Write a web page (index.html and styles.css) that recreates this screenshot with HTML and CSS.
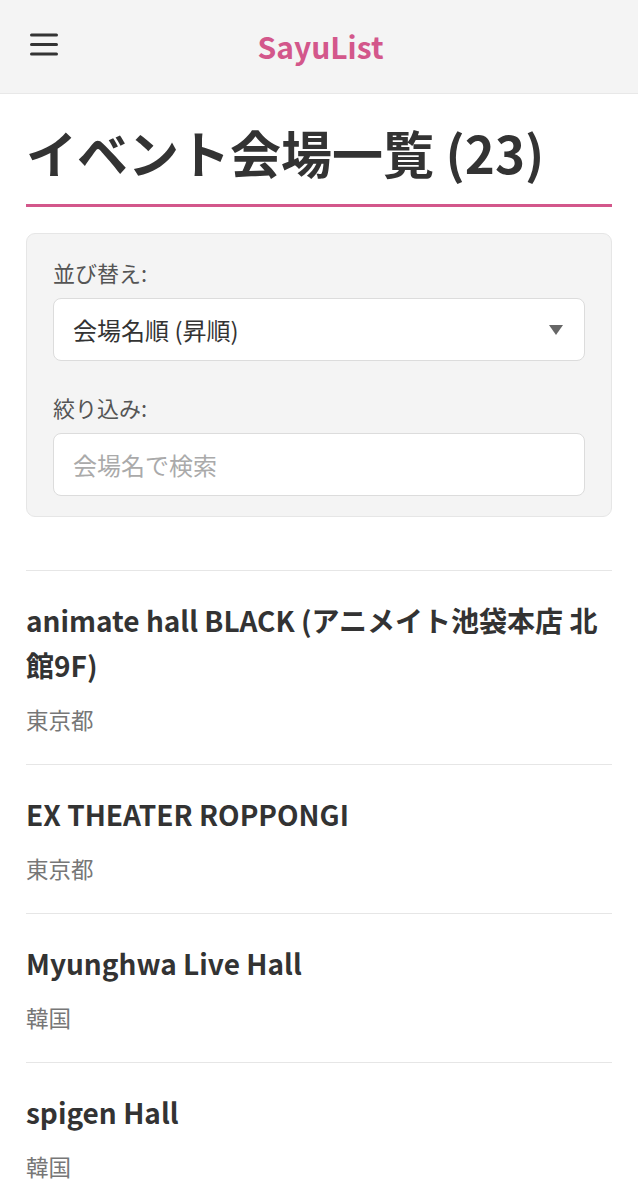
FILE: index.html
```html
<!DOCTYPE html>
<html lang="ja">
<head>
<meta charset="utf-8">
<meta name="viewport" content="width=device-width, initial-scale=1">
<title>SayuList</title>
<link rel="stylesheet" href="styles.css">
</head>
<body>
<header class="topbar">
  <button class="menu-btn" aria-label="menu">
    <svg width="30" height="24" viewBox="0 0 30 24">
      <rect x="1" y="1.5" width="28" height="3" rx="1.5" fill="#333"/>
      <rect x="1" y="11" width="28" height="3" rx="1.5" fill="#333"/>
      <rect x="1" y="20.5" width="28" height="3" rx="1.5" fill="#333"/>
    </svg>
  </button>
  <div class="brand">SayuList</div>
  <div class="spacer"></div>
</header>
<main class="content">
  <h1 class="page-title">イベント会場一覧 (23)</h1>
  <section class="filters">
    <label class="field-label" for="sort">並び替え:</label>
    <div class="select-wrap">
      <select id="sort" class="control">
        <option>会場名順 (昇順)</option>
      </select>
      <svg class="caret" width="14" height="10" viewBox="0 0 14 10"><path d="M0 0H14L7 10Z" fill="#666"/></svg>
    </div>
    <label class="field-label second" for="q">絞り込み:</label>
    <input id="q" class="control" type="text" placeholder="会場名で検索">
  </section>
  <ul class="venues">
    <li class="venue">
      <div class="venue-name">animate hall BLACK (アニメイト池袋本店 北館9F)</div>
      <div class="venue-loc">東京都</div>
    </li>
    <li class="venue">
      <div class="venue-name">EX THEATER ROPPONGI</div>
      <div class="venue-loc">東京都</div>
    </li>
    <li class="venue">
      <div class="venue-name">Myunghwa Live Hall</div>
      <div class="venue-loc">韓国</div>
    </li>
    <li class="venue">
      <div class="venue-name">spigen Hall</div>
      <div class="venue-loc">韓国</div>
    </li>
  </ul>
</main>
</body>
</html>
```

FILE: styles.css
```css
* { box-sizing: border-box; }
html, body {
  margin: 0;
  padding: 0;
  background: #fff;
  font-family: "Noto Sans CJK JP", "Noto Sans", sans-serif;
  color: #333;
}
.topbar {
  height: 94px;
  background: #f4f4f4;
  border-bottom: 1px solid #e8e8e8;
  display: grid;
  grid-template-columns: 1fr auto 1fr;
  align-items: center;
  padding: 0 26px 0 29px;
}
.menu-btn {
  justify-self: start;
  background: none;
  border: 0;
  padding: 0;
  margin-top: -5px;
  width: 30px;
  height: 24px;
  display: block;
}
.menu-btn svg { display: block; }
.brand {
  font-size: 30px;
  font-weight: 700;
  color: #d3578b;
  line-height: 40px;
  margin-top: -2px;
}
.content {
  padding: 0 26px;
}
.page-title {
  margin: 25px 0 0;
  font-size: 51px;
  line-height: 66px;
  font-weight: 700;
  color: #333;
  padding-bottom: 19px;
  border-bottom: 3px solid #d3578b;
}
.filters {
  margin-top: 26px;
  background: #f4f4f4;
  border: 1px solid #e6e6e6;
  border-radius: 9px;
  padding: 22px 26px 20px;
  display: flex;
  flex-direction: column;
}
.field-label {
  font-size: 22px;
  line-height: 33px;
  color: #555;
  margin-bottom: 9px;
}
.field-label.second { margin-top: 30px; }
.select-wrap { position: relative; }
.control {
  display: block;
  width: 100%;
  height: 63px;
  background: #fff;
  border: 1px solid #dcdcdc;
  border-radius: 8px;
  padding: 0 19px;
  font-family: inherit;
  font-size: 24px;
  color: #333;
  appearance: none;
  -webkit-appearance: none;
  outline: none;
}
.control::placeholder { color: #aaa; }
.caret {
  position: absolute;
  right: 22px;
  top: 27px;
  pointer-events: none;
}
.venues {
  list-style: none;
  margin: 53px 0 0;
  padding: 0;
}
.venue {
  border-top: 1px solid #e6e6e6;
  padding: 27px 0 28px;
}
.venue-name {
  font-size: 28px;
  line-height: 45px;
  font-weight: 700;
  color: #333;
}
.venue-loc {
  margin-top: 15px;
  font-size: 22.5px;
  line-height: 33px;
  color: #777;
}
```
